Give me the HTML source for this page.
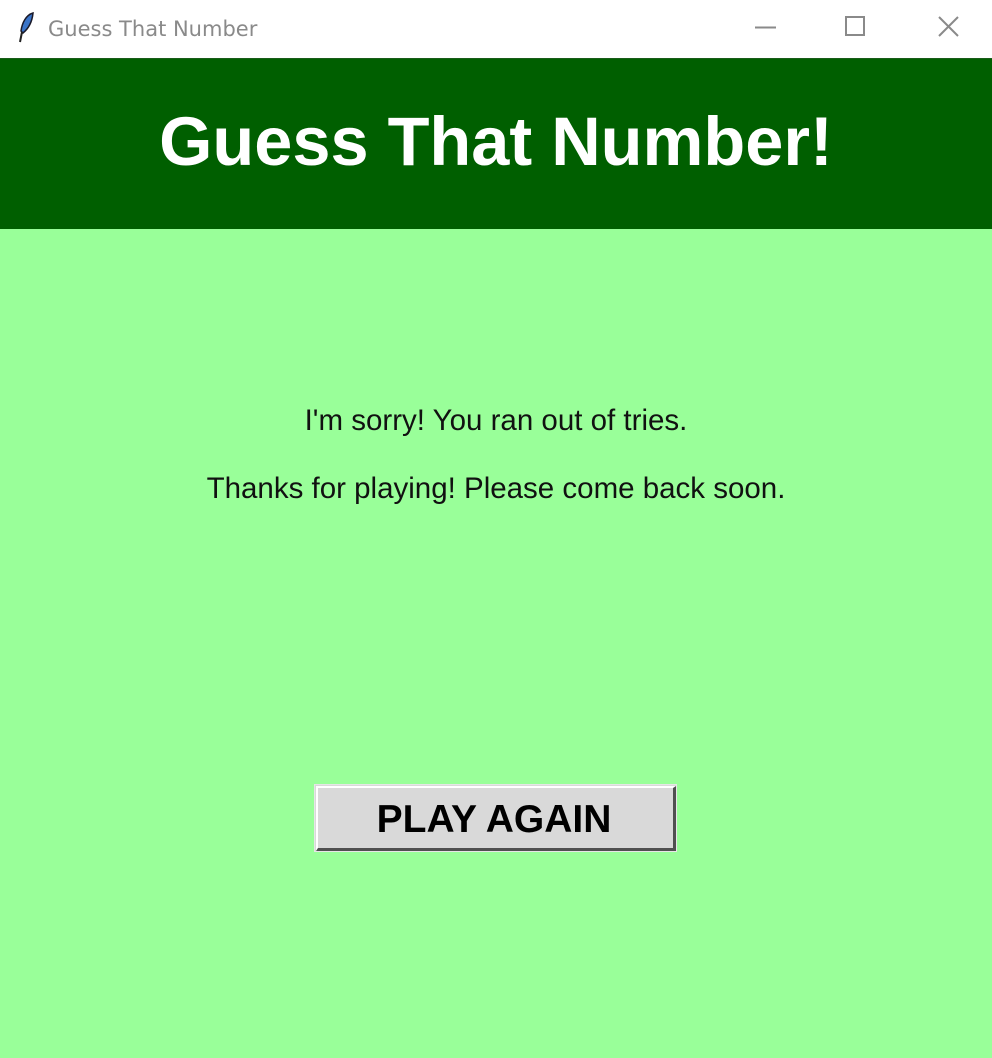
<!DOCTYPE html>
<html><head><style>
html,body{margin:0;padding:0;width:992px;height:1058px;overflow:hidden;background:#99ff99;font-family:"Liberation Sans",sans-serif}
.tb{position:absolute;left:0;top:0;width:992px;height:58px;background:#fff;border-bottom:1px solid #1a5c1a}
.tt{position:absolute;left:48px;top:16px;font-family:"Segoe UI","DejaVu Sans",sans-serif;font-size:21px;color:#8a8a8a;line-height:26px}
.hd{position:absolute;left:0;top:59px;width:992px;height:170px;background:#005f00}
.t{position:absolute;left:0;width:992px;text-align:center;line-height:1;white-space:nowrap}
.btn{position:absolute;left:314px;top:784px;width:363px;height:68px;box-sizing:border-box;background:#d9d9d9;border:1px solid #e6e6e6}
.btn:before{content:"";position:absolute;left:1px;top:1px;right:0;bottom:0;border-top:2px solid #fff;border-left:2px solid #fff;border-right:3px solid #505050;border-bottom:3px solid #505050;box-sizing:border-box}
</style></head><body>
<div class="tb">
<svg style="position:absolute;left:16px;top:11px" width="22" height="34" viewBox="0 0 22 34"><path d="M17 2 C10 4 6 12 5 20 L7 22 C12 18 16 12 17 2Z" fill="#3a74c8" stroke="#1a1a2a" stroke-width="1.5"/><path d="M6 21 L4 31" stroke="#222" stroke-width="2"/></svg>
<div class="tt">Guess That Number</div>
<svg style="position:absolute;left:755px;top:17px" width="22" height="22"><line x1="0" y1="10.5" x2="21" y2="10.5" stroke="#8a8a8a" stroke-width="2"/></svg>
<svg style="position:absolute;left:845px;top:16px" width="22" height="22"><rect x="1" y="1" width="18" height="18" fill="none" stroke="#8a8a8a" stroke-width="2"/></svg>
<svg style="position:absolute;left:938px;top:16px" width="22" height="22"><path d="M1 1L20 20M20 1L1 20" stroke="#8a8a8a" stroke-width="2"/></svg>
</div>
<div class="hd"></div>
<div class="t" style="top:108px;font-size:68.5px;font-weight:bold;color:#fff">Guess That Number!</div>
<div class="t" style="top:406px;font-size:29.5px;color:#111">I'm sorry! You ran out of tries.</div>
<div class="t" style="top:474px;font-size:29.5px;color:#111">Thanks for playing! Please come back soon.</div>
<div class="btn"></div>
<div class="t" style="top:800px;font-size:39px;font-weight:bold;color:#000;left:-2px">PLAY AGAIN</div>
</body></html>
